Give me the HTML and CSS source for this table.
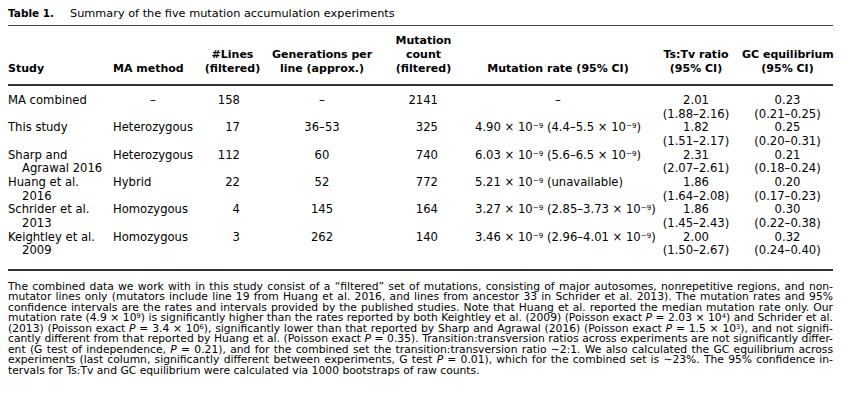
FILE: index.html
```html
<!DOCTYPE html>
<html lang="en">
<head>
<meta charset="utf-8">
<title>Table 1. Summary of the five mutation accumulation experiments</title>
<link rel="stylesheet" href="styles.css">
</head>
<body>
<div class="page">
  <div class="title"><span class="label">Table 1.</span><span class="caption">Summary of the five mutation accumulation experiments</span></div>
  <table class="ma">
    <colgroup>
      <col class="w-study"><col class="w-method"><col class="w-lines"><col class="w-gen"><col class="w-count"><col class="w-rate"><col class="w-tstv"><col class="w-gc">
    </colgroup>
    <thead>
      <tr>
        <th class="h-left">Study</th>
        <th class="h-left">MA method</th>
        <th>#Lines<br>(filtered)</th>
        <th>Generations per<br>line (approx.)</th>
        <th>Mutation<br>count<br>(filtered)</th>
        <th class="h-rate">Mutation rate (95% CI)</th>
        <th>Ts:Tv ratio<br>(95% CI)</th>
        <th>GC equilibrium<br>(95% CI)</th>
      </tr>
    </thead>
    <tbody>
      <tr>
        <td class="study">MA combined</td>
        <td class="method dash">–</td>
        <td class="lines">158</td>
        <td class="gen">–</td>
        <td class="count">2141</td>
        <td class="rate dash">–</td>
        <td class="ci">2.01<br>(1.88–2.16)</td>
        <td class="ci">0.23<br>(0.21–0.25)</td>
      </tr>
      <tr>
        <td class="study">This study</td>
        <td class="method">Heterozygous</td>
        <td class="lines">17</td>
        <td class="gen">36–53</td>
        <td class="count">325</td>
        <td class="rate">4.90 × 10<sup>−9</sup> (4.4–5.5 × 10<sup>−9</sup>)</td>
        <td class="ci">1.82<br>(1.51–2.17)</td>
        <td class="ci">0.25<br>(0.20–0.31)</td>
      </tr>
      <tr>
        <td class="study">Sharp and<br>Agrawal 2016</td>
        <td class="method">Heterozygous</td>
        <td class="lines">112</td>
        <td class="gen">60</td>
        <td class="count">740</td>
        <td class="rate">6.03 × 10<sup>−9</sup> (5.6–6.5 × 10<sup>−9</sup>)</td>
        <td class="ci">2.31<br>(2.07–2.61)</td>
        <td class="ci">0.21<br>(0.18–0.24)</td>
      </tr>
      <tr>
        <td class="study">Huang et al.<br>2016</td>
        <td class="method">Hybrid</td>
        <td class="lines">22</td>
        <td class="gen">52</td>
        <td class="count">772</td>
        <td class="rate">5.21 × 10<sup>−9</sup> (unavailable)</td>
        <td class="ci">1.86<br>(1.64–2.08)</td>
        <td class="ci">0.20<br>(0.17–0.23)</td>
      </tr>
      <tr>
        <td class="study">Schrider et al.<br>2013</td>
        <td class="method">Homozygous</td>
        <td class="lines">4</td>
        <td class="gen">145</td>
        <td class="count">164</td>
        <td class="rate">3.27 × 10<sup>−9</sup> (2.85–3.73 × 10<sup>−9</sup>)</td>
        <td class="ci">1.86<br>(1.45–2.43)</td>
        <td class="ci">0.30<br>(0.22–0.38)</td>
      </tr>
      <tr>
        <td class="study">Keightley et al.<br>2009</td>
        <td class="method">Homozygous</td>
        <td class="lines">3</td>
        <td class="gen">262</td>
        <td class="count">140</td>
        <td class="rate">3.46 × 10<sup>−9</sup> (2.96–4.01 × 10<sup>−9</sup>)</td>
        <td class="ci">2.00<br>(1.50–2.67)</td>
        <td class="ci">0.32<br>(0.24–0.40)</td>
      </tr>
    </tbody>
  </table>
  <p class="note">
    <span class="ln">The combined data we work with in this study consist of a “filtered” set of mutations, consisting of major autosomes, nonrepetitive regions, and non-</span>
    <span class="ln">mutator lines only (mutators include line 19 from Huang et al. 2016, and lines from ancestor 33 in Schrider et al. 2013). The mutation rates and 95%</span>
    <span class="ln">confidence intervals are the rates and intervals provided by the published studies. Note that Huang et al. reported the median mutation rate only. Our</span>
    <span class="ln">mutation rate (4.9 × 10<sup>9</sup>) is significantly higher than the rates reported by both Keightley et al. (2009) (Poisson exact <i>P</i> = 2.03 × 10<sup>4</sup>) and Schrider et al.</span>
    <span class="ln">(2013) (Poisson exact <i>P</i> = 3.4 × 10<sup>6</sup>), significantly lower than that reported by Sharp and Agrawal (2016) (Poisson exact <i>P</i> = 1.5 × 10<sup>3</sup>), and not signifi-</span>
    <span class="ln">cantly different from that reported by Huang et al. (Poisson exact <i>P</i> = 0.35). Transition:transversion ratios across experiments are not significantly differ-</span>
    <span class="ln">ent (G test of independence, <i>P</i> = 0.21), and for the combined set the transition:transversion ratio ∼2:1. We also calculated the GC equilibrium across</span>
    <span class="ln">experiments (last column, significantly different between experiments, G test <i>P</i> = 0.01), which for the combined set is ∼23%. The 95% confidence in-</span>
    <span class="ln end">tervals for Ts:Tv and GC equilibrium were calculated via 1000 bootstraps of raw counts.</span>
  </p>
</div>
</body>
</html>
```

FILE: styles.css
```css
html, body {
  margin: 0;
  padding: 0;
  background: #ffffff;
}

body {
  color: #000000;
  font-family: "DejaVu Sans", "Noto Sans", sans-serif;
}

.page {
  width: 825px;
  padding: 6px 0 0 8px;
}

.title {
  display: flex;
  align-items: baseline;
  font-size: 11.3px;
  line-height: 14px;
  margin-bottom: 4px;
}

.title .label {
  width: 62px;
  flex: none;
  font-weight: bold;
  font-size: 10.5px;
}

.ma {
  width: 825px;
  table-layout: fixed;
  border-collapse: collapse;
  border-top: 1px solid #444444;
  border-bottom: 2px solid #333333;
}

.w-study { width: 105px; }
.w-method { width: 80px; }
.w-lines { width: 79px; }
.w-gen { width: 100px; }
.w-count { width: 103px; }
.w-rate { width: 175px; }
.w-tstv { width: 92px; }
.w-gc { width: 91px; }

.ma th {
  font-weight: bold;
  font-size: 11px;
  line-height: 14px;
  vertical-align: bottom;
  text-align: center;
  white-space: nowrap;
  padding: 8px 0 8px 0;
  border-bottom: 2px solid #333333;
}

.ma th.h-left {
  text-align: left;
}

.ma th.h-rate {
  padding-right: 9px;
}

.ma td {
  font-size: 11.6px;
  line-height: 13.65px;
  vertical-align: top;
  padding: 0;
  white-space: nowrap;
}

.ma tbody tr:first-child td {
  padding-top: 8px;
}

.ma tbody tr:last-child td {
  padding-bottom: 11px;
}

.ma td.study {
  text-align: left;
  padding-left: 14px;
  text-indent: -14px;
}

.ma td.method {
  text-align: left;
}

.ma td.method.dash {
  text-align: center;
}

.ma td.lines {
  text-align: right;
  padding-right: 32px;
}

.ma td.gen {
  text-align: center;
}

.ma td.count {
  text-align: right;
  padding-right: 37px;
}

.ma td.rate {
  text-align: left;
}

.ma td.rate.dash {
  text-align: center;
  padding-right: 9px;
}

.ma td.ci {
  text-align: center;
}

sup {
  font-size: 0.62em;
  line-height: 0;
  vertical-align: 0.42em;
}

.note {
  margin: 11px 0 0 0;
  font-size: 10.75px;
  line-height: 10.5px;
}

.note .ln {
  display: block;
  text-align: justify;
  text-align-last: justify;
}

.note .ln.end {
  text-align-last: left;
}
```
